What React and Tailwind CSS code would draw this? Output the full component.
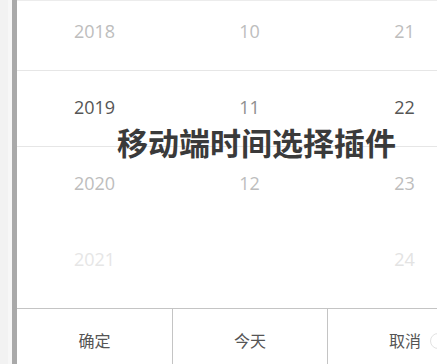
import React from 'react';

const cols = [
    [
        { v: '2018', c: 'text-[#bdbdbd]' },
        { v: '2019', c: 'text-[#555555]' },
        { v: '2020', c: 'text-[#bdbdbd]' },
        { v: '2021', c: 'text-[#e6e6e6]' },
    ],
    [
        { v: '10', c: 'text-[#bdbdbd]' },
        { v: '11', c: 'text-[#8f8f8f]' },
        { v: '12', c: 'text-[#bdbdbd]' },
        { v: '', c: '' },
    ],
    [
        { v: '21', c: 'text-[#bdbdbd]' },
        { v: '22', c: 'text-[#555555]' },
        { v: '23', c: 'text-[#bdbdbd]' },
        { v: '24', c: 'text-[#e3e3e3]' },
    ],
];

export default function App() {
    return (
        <div className="w-[437px] h-[364px] overflow-hidden flex bg-white" style={{ fontFamily: "'Open Sans', 'Noto Sans CJK SC', sans-serif" }}>
            {/* left edge */}
            <div className="w-[8px] shrink-0 bg-[#f2f2f2]" />
            <div className="w-[4px] shrink-0 bg-[#f7f7f7]" />
            <div className="w-[5px] shrink-0 bg-[#a9a9a9]" />

            {/* picker */}
            <div className="relative flex-1 overflow-hidden">
                <div className="w-[465px]">
                    <div className="relative h-[308px] overflow-hidden border-t border-[#ececec]">
                        <div className="flex mt-[-8px]">
                            {cols.map((col, i) => (
                                <div key={i} className="w-[155px] shrink-0 flex flex-col">
                                    {col.map((r, j) => (
                                        <div key={j} className={`h-[76px] flex items-center justify-center text-[18px] ${r.c}`}>
                                            {r.v}
                                        </div>
                                    ))}
                                </div>
                            ))}
                        </div>
                        {/* selection band */}
                        <div className="absolute left-0 right-0 top-[69px] h-[77px] border-y border-[#e6e6e6] pointer-events-none" />
                    </div>

                    {/* buttons */}
                    <div className="flex h-[64px] border-t border-[#c4c4c4] text-[16px] text-[#555555]">
                        <div className="w-[155px] shrink-0 flex items-center justify-center">确定</div>
                        <div className="w-[155px] shrink-0 flex items-center justify-center border-l border-[#c4c4c4]">今天</div>
                        <div className="relative w-[155px] shrink-0 flex items-center justify-center border-l border-[#c4c4c4]">
                            取消
                            <span className="absolute left-[102px] top-[24px] w-[16px] h-[16px] rounded-full border border-[#e2e2e2]" />
                        </div>
                    </div>
                </div>

                {/* title overlay */}
                <div className="absolute left-[100px] top-[124px] text-[31px] leading-[36px] font-bold text-[#3a3a3a] whitespace-nowrap" style={{ fontFamily: "'Noto Sans CJK SC', sans-serif" }}>
                    移动端时间选择插件
                </div>
            </div>
        </div>
    );
}
